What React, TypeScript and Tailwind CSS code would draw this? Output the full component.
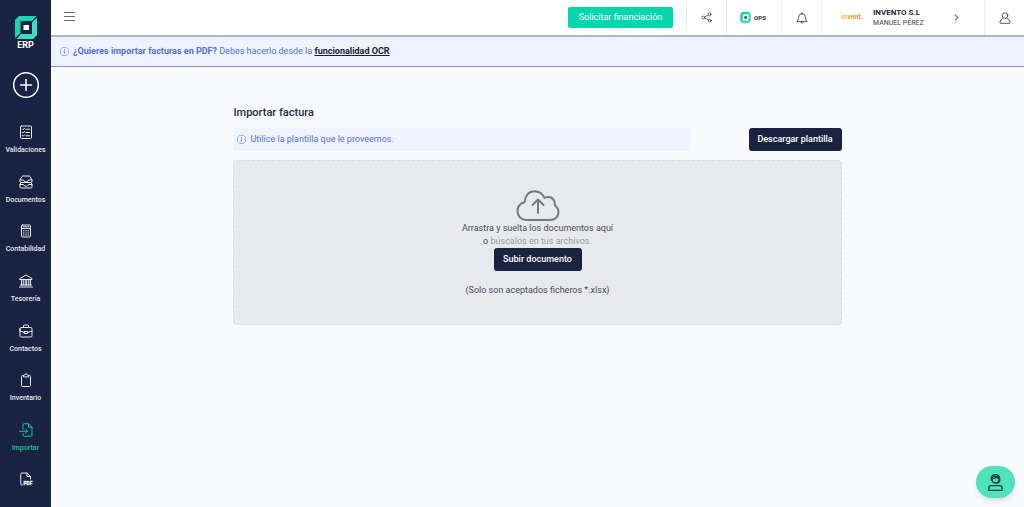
import { ReactNode } from "react";
import { BsInfoCircle, BsChevronRight } from "react-icons/bs";

interface IconProps {
  className?: string;
  children: ReactNode;
}

const Icon: React.FC<IconProps> = ({ className = "size-[14px]", children }) => (
  <svg
    viewBox="0 0 28 28"
    className={className}
    fill="none"
    stroke="currentColor"
    strokeWidth="2"
    strokeLinecap="round"
    strokeLinejoin="round"
    aria-hidden="true"
  >
    {children}
  </svg>
);

const validationsIcon = (
  <Icon>
    <rect x="3" y="2" width="22" height="25" rx="2" />
    <path d="M7 8l1.5 1.5L11 6.5M7 14.5l1.5 1.5 2.5-3M7 21l1.5 1.5 2.5-3M14 8.500h7M14 15h7M14 21.500h7" />
  </Icon>
);

const documentsIcon = (
  <Icon>
    <path d="M2 10l4-7q.6-1 2-1h12q1.400 0 2 1l4 7v3q0 2-2 2H4q-2 0-2-2zM2 10h7q1 4 5 4t5-4h7" />
    <path d="M4 15l-2 4v5q0 2 2 2h20q2 0 2-2v-5l-2-4M2 19h7q1 3.500 5 3.500t5-3.500h7" />
  </Icon>
);

const accountingIcon = (
  <Icon>
    <rect x="5" y="2" width="18" height="24" rx="2" />
    <path d="M5 9h18M8 5.500h12" />
    <path
      d="M9.500 13.500h.1M14 13.500h.1M18.500 13.500h.1M9.500 17.800h.1M14 17.800h.1M18.500 17.800h.1M9.500 22h.1M14 22h.1M18.500 22h.1"
      strokeWidth="2.6"
    />
  </Icon>
);

const treasuryIcon = (
  <Icon>
    <path d="M2 9l12-7 12 7v2H2zM3 22h22M1 26h26M5 11v11M8.500 11v11M12.500 11v11M15.500 11v11M19.500 11v11M23 11v11" />
  </Icon>
);

const contactsIcon = (
  <Icon>
    <rect x="2" y="7" width="24" height="19" rx="2.500" />
    <path d="M9 7V4q0-2 2-2h6q2 0 2 2v3M2 14l9 3M26 14l-9 3M2 14V9M11 15h6v4h-6z" />
  </Icon>
);

const inventoryIcon = (
  <Icon>
    <path d="M9 5H7Q5 5 5 7v18q0 2 2 2h14q2 0 2-2V7q0-2-2-2h-2" />
    <path d="M9 7V5q0-1 1-1h1.500Q12 1.500 14 1.500T16.500 4H18q1 0 1 1v2z" />
  </Icon>
);

const importIcon = (
  <Icon>
    <path d="M8 12V4q0-2.500 2.500-2.500H19l7 7V24q0 2.500-2.500 2.500h-13Q8 26.500 8 24v-3M19 2v6.500h7" />
    <path d="M1 16.500h16M13 12.500l4 4-4 4" />
  </Icon>
);

const pdfIcon = (
  <Icon>
    <path d="M7 26H6q-2.500 0-2.500-2.500v-19Q3.500 2 6 2h10l7 7v5M16 2v7h7" />
    <text x="9" y="26.500" fontSize="9.500" fontWeight="900" fill="currentColor" strokeWidth="0.600">
      PDF
    </text>
  </Icon>
);

const Mark: React.FC<{ className: string }> = ({ className }) => (
  <svg viewBox="0 0 44 46" className={className} aria-hidden="true">
    <path d="M8 0h35l-9 10H11v24L0 44V8z" fill="#14d8ae" />
    <path d="M44 3v35l-8 8H3l9-10h22V13z" fill="#37dfbd" />
    <rect x="17" y="18" width="11" height="10" className="fill-current" />
  </svg>
);

const items = [
  { label: "Validaciones", icon: validationsIcon },
  { label: "Documentos", icon: documentsIcon },
  { label: "Contabilidad", icon: accountingIcon },
  { label: "Tesorería", icon: treasuryIcon },
  { label: "Contactos", icon: contactsIcon },
  { label: "Inventario", icon: inventoryIcon },
  { label: "Importar", icon: importIcon, active: true },
  { label: "", icon: pdfIcon },
];

const Sidebar = () => (
  <aside className="sticky top-0 flex h-screen w-[51px] shrink-0 flex-col items-center bg-[#1a2341] text-white">
    <a href="#inicio" className="mt-4 flex flex-col items-center">
      <Mark className="h-[23px] w-[22px]" />
      <span className="text-[9px] leading-[13px] font-bold">ERP</span>
    </a>
    <button aria-label="Crear" className="mt-[19px]">
      <svg viewBox="0 0 28 28" className="size-7" fill="none" stroke="currentColor" strokeLinecap="round">
        <circle cx="14" cy="14" r="12.300" strokeWidth="1.500" />
        <path d="M14 8.500v11M8.500 14h11" strokeWidth="1.500" />
      </svg>
    </button>
    <nav className="mt-[11px] flex w-full flex-1 flex-col">
      {items.map((item) => (
        <a
          key={item.label}
          href="#menu"
          aria-label={item.label || "PDF"}
          className={`flex flex-1 flex-col items-center pt-[15px] ${item.active ? "text-[#12c8a6]" : "text-[#e6e9f2]"}`}
        >
          {item.icon}
          <span className="mt-[6px] text-[7px] leading-[10px] font-medium">{item.label}</span>
        </a>
      ))}
    </nav>
  </aside>
);

const Header = () => (
  <header className="flex h-[37px] items-stretch border-b-2 border-[#aab7cf] bg-white text-[#39405a]">
    <button aria-label="Menú" className="ml-[13px] self-center pb-[2px]">
      <svg viewBox="0 0 11 10" className="h-[10px] w-[11px]" stroke="#646b7b" aria-hidden="true">
        <path d="M0 .5h11M0 4.500h11M0 8.500h11" />
      </svg>
    </button>
    <button className="ml-auto mr-[13px] h-[21px] w-[105px] self-center rounded-[2px] bg-[#06d6ad] text-[9px] text-white">
      Solicitar financiación
    </button>
    <button aria-label="Compartir" className="flex w-10 items-center justify-center border-l border-[#eceef3]">
      <Icon className="size-[11px]">
        <circle cx="6" cy="14" r="3.500" />
        <circle cx="22" cy="6" r="3.500" />
        <circle cx="22" cy="22" r="3.500" />
        <path d="M9.500 12.500l9-5M9.500 15.500l9 5" />
      </Icon>
    </button>
    <button className="flex w-[55px] items-center justify-center gap-[3px] border-l border-[#eceef3] pr-[2px]">
      <Mark className="size-[11px]" />
      <span className="text-[6px] font-black">OPS</span>
    </button>
    <button aria-label="Notificaciones" className="flex w-10 items-center justify-center border-l border-[#eceef3]">
      <Icon className="size-[12px]">
        <path d="M14 2v2M14 4q-8 0-8 8 0 8-4 10h24q-4-2-4-10 0-8-8-8zM11 23q0 3 3 3t3-3" />
      </Icon>
    </button>
    <button className="flex w-[163px] items-center border-l border-[#eceef3] pl-[19px] text-left">
      <span className="w-8 bg-linear-to-r from-[#fbbf3c] to-[#ef6a3a] bg-clip-text text-[7px] font-black text-transparent">
        invent.
      </span>
      <span className="flex flex-1 flex-col">
        <span className="text-[8px] leading-[10px] font-bold text-[#252b3d]">INVENTO S.L</span>
        <span className="text-[7px] leading-[10px]">MANUEL PÉREZ</span>
      </span>
      <BsChevronRight className="mr-6 size-[7px] stroke-1" />
    </button>
    <button aria-label="Perfil" className="flex w-10 items-center justify-center border-l border-[#eceef3]">
      <Icon className="size-[12px]">
        <circle cx="14" cy="8.500" r="6.500" />
        <path d="M9 15q-7 2-7 10 0 1.500 1.500 1.500h21Q26 26.500 26 25q0-8-7-10" />
      </Icon>
    </button>
  </header>
);

export default function App() {
  return (
    <div className="flex min-h-screen bg-[#f9fafd] font-['Roboto',sans-serif]">
      <Sidebar />
      <div className="min-w-0 flex-1">
        <Header />
        <div className="flex h-[30px] items-center gap-1 border-b border-[#7f95d8] bg-[#edf3ff] pl-[9px] text-[9px] text-[#5671e8]">
          <BsInfoCircle className="size-[9px]" />
          <p>
            <b>¿Quieres importar facturas en PDF?</b> Debes hacerlo desde la{" "}
            <a href="#ocr" className="font-bold text-[#1a2136] underline">
              funcionalidad OCR
            </a>
          </p>
        </div>
        <main className="mx-auto mt-[39px] w-[62.5%] text-[9px]">
          <h1 className="text-[11px] leading-[14px] font-medium text-[#252b45]">Importar factura</h1>
          <div className="mt-2 flex items-center justify-between">
            <p className="flex h-[23px] w-3/4 items-center gap-1 bg-[#eff3ff] pl-1 text-[#5672ec]">
              <BsInfoCircle className="size-[9px]" />
              Utilice la plantilla que le proveemos.
            </p>
            <button className="h-[23px] w-[93px] rounded-[3px] bg-[#1a2341] font-medium text-white">
              Descargar plantilla
            </button>
          </div>
          <section className="mt-[9px] flex flex-col items-center rounded-[4px] border border-dashed border-[#d9dadd] bg-[#e8e9ed] pt-[29px] pb-[27px] text-[#4a4d55]">
            <svg
              viewBox="0 0 44 32"
              className="h-8 w-11"
              fill="none"
              stroke="#77797e"
              strokeWidth="2"
              strokeLinecap="round"
              strokeLinejoin="round"
              aria-hidden="true"
            >
              <path d="M10 30h24c5 0 8.500-3.500 8.500-8 0-3-1.500-5-3.500-6.500 0-5-2-8.500-7-8.500-1.500 0-2.500.3-3.500 1C26.500 3.500 23 1.200 18.500 1.200 13 1.200 9 5.500 8.700 12 4 13.500 1.500 17 1.500 21c0 5 3.500 9 8.500 9z" />
              <path d="M22 23V10M16.500 15L22 9.500 27.500 15" />
            </svg>
            <p className="text-center leading-[13px]">
              Arrastra y suelta los documentos aquí
              <br />o <span className="text-[#9699a1]">búscalos en tus archivos.</span>
            </p>
            <button className="h-[23px] w-[88px] rounded-[3px] bg-[#1a2341] font-medium text-white">
              Subir documento
            </button>
            <p className="mt-[13px] leading-[13px]">(Solo son aceptados ficheros *.xlsx)</p>
          </section>
        </main>
      </div>
      <button
        aria-label="Soporte"
        className="fixed right-[9px] bottom-[9px] flex h-8 w-[39px] items-center justify-center rounded-full bg-[#4ee2bd] text-[#16413f] shadow-md"
      >
        <Icon className="size-[17px]">
          <circle cx="14" cy="9" r="5.500" />
          <path d="M7 11V8q0-7 7-7t7 7v3M9 7q5 1 6-2 2 2 4 2M21 11q0 4-6 4" />
          <path d="M3 27v-4q0-4 4-4h14q4 0 4 4v4z" />
        </Icon>
      </button>
    </div>
  );
}
